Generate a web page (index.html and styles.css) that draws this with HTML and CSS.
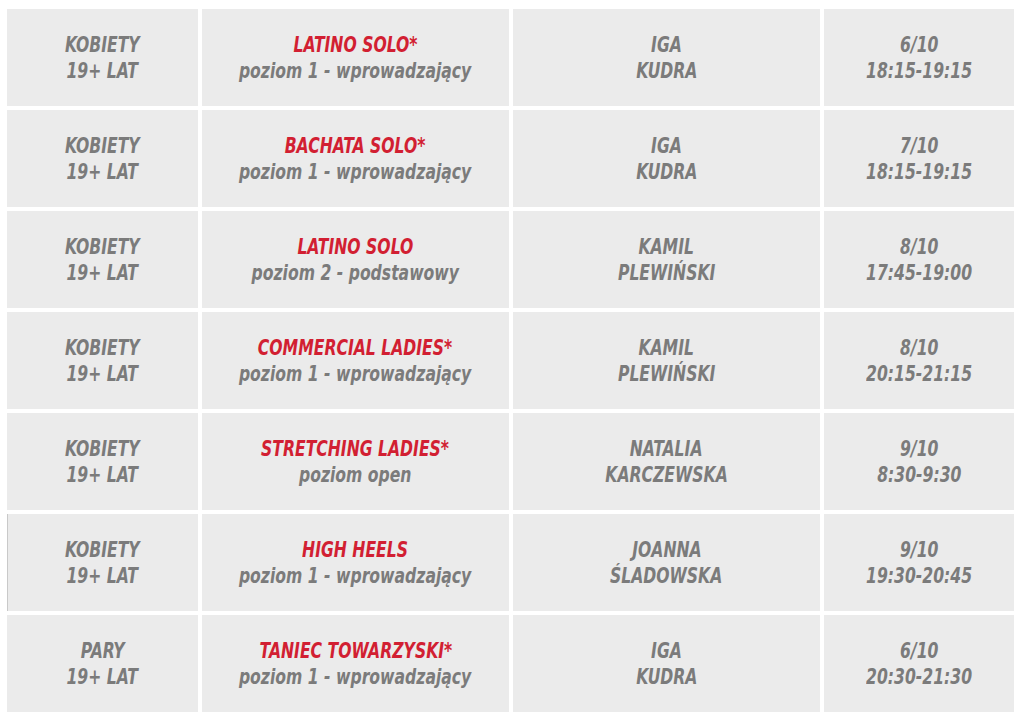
FILE: index.html
```html
<!DOCTYPE html>
<html lang="pl">
<head>
<meta charset="utf-8">
<title>Grafik zajęć</title>
<link rel="stylesheet" href="styles.css">
</head>
<body>
<div class="schedule">
  <div class="cell"><span>KOBIETY</span><span>19+ LAT</span></div>
  <div class="cell"><span class="title">LATINO SOLO*</span><span>poziom 1 - wprowadzający</span></div>
  <div class="cell"><span>IGA</span><span>KUDRA</span></div>
  <div class="cell"><span>6/10</span><span>18:15-19:15</span></div>

  <div class="cell"><span>KOBIETY</span><span>19+ LAT</span></div>
  <div class="cell"><span class="title">BACHATA SOLO*</span><span>poziom 1 - wprowadzający</span></div>
  <div class="cell"><span>IGA</span><span>KUDRA</span></div>
  <div class="cell"><span>7/10</span><span>18:15-19:15</span></div>

  <div class="cell"><span>KOBIETY</span><span>19+ LAT</span></div>
  <div class="cell"><span class="title">LATINO SOLO</span><span>poziom 2 - podstawowy</span></div>
  <div class="cell"><span>KAMIL</span><span>PLEWIŃSKI</span></div>
  <div class="cell"><span>8/10</span><span>17:45-19:00</span></div>

  <div class="cell"><span>KOBIETY</span><span>19+ LAT</span></div>
  <div class="cell"><span class="title">COMMERCIAL LADIES*</span><span>poziom 1 - wprowadzający</span></div>
  <div class="cell"><span>KAMIL</span><span>PLEWIŃSKI</span></div>
  <div class="cell"><span>8/10</span><span>20:15-21:15</span></div>

  <div class="cell"><span>KOBIETY</span><span>19+ LAT</span></div>
  <div class="cell"><span class="title">STRETCHING LADIES*</span><span>poziom open</span></div>
  <div class="cell"><span>NATALIA</span><span>KARCZEWSKA</span></div>
  <div class="cell"><span>9/10</span><span>8:30-9:30</span></div>

  <div class="cell cell-edge"><span>KOBIETY</span><span>19+ LAT</span></div>
  <div class="cell"><span class="title">HIGH HEELS</span><span>poziom 1 - wprowadzający</span></div>
  <div class="cell"><span>JOANNA</span><span>ŚLADOWSKA</span></div>
  <div class="cell"><span>9/10</span><span>19:30-20:45</span></div>

  <div class="cell"><span>PARY</span><span>19+ LAT</span></div>
  <div class="cell"><span class="title">TANIEC TOWARZYSKI*</span><span>poziom 1 - wprowadzający</span></div>
  <div class="cell"><span>IGA</span><span>KUDRA</span></div>
  <div class="cell"><span>6/10</span><span>20:30-21:30</span></div>
</div>
</body>
</html>
```
FILE: styles.css
```css
html, body {
  margin: 0;
  padding: 0;
  background: #ffffff;
}

.schedule {
  display: grid;
  grid-template-columns: 191px 307px 307px 190px;
  grid-auto-rows: 97px;
  column-gap: 4px;
  row-gap: 4px;
  padding: 9px 0 0 7px;
}

.cell {
  background: #ebebeb;
  display: flex;
  flex-direction: column;
  align-items: center;
  justify-content: center;
  padding-top: 1px;
  font-family: "DejaVu Sans Condensed", "DejaVu Sans", sans-serif;
  font-stretch: condensed;
  font-weight: bold;
  font-style: italic;
  font-size: 22px;
  line-height: 26px;
  color: #7b7b7b;
  text-align: center;
  white-space: nowrap;
}

.cell span {
  display: block;
  transform: scaleX(0.79);
}

.cell-edge {
  box-shadow: inset 1px 0 0 #c9c9c9;
}

.cell .title {
  color: #d21f32;
}
```
